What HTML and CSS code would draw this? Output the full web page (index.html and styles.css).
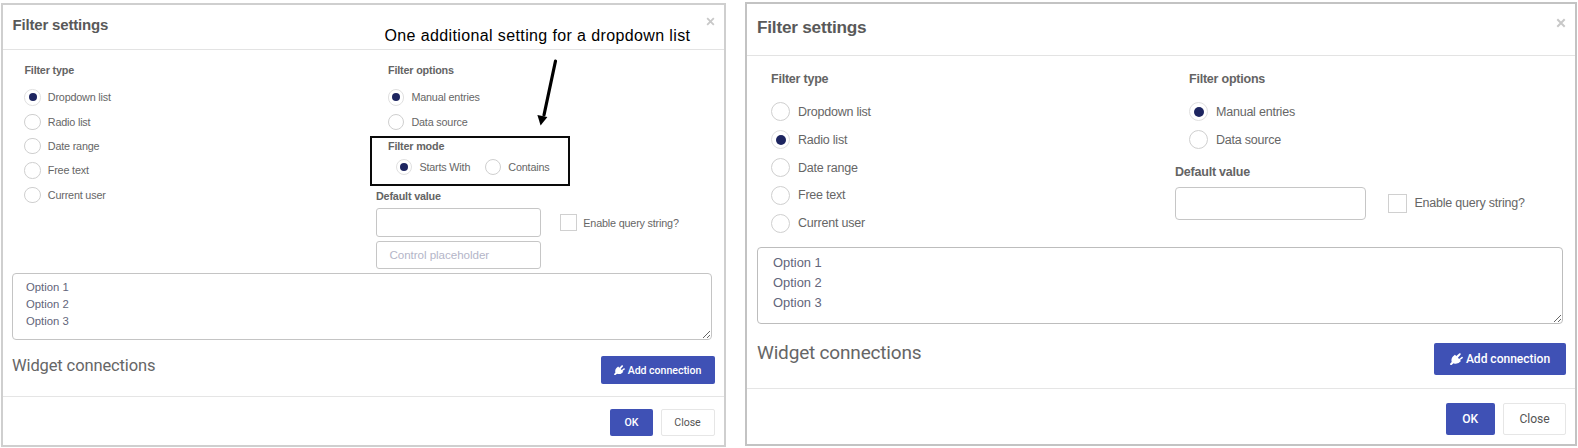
FILE: index.html
```html
<!DOCTYPE html>
<html lang="en">
<head>
<meta charset="utf-8">
<title>Filter settings</title>
<link rel="stylesheet" href="styles.css">
</head>
<body>
<svg class="symbols" aria-hidden="true">
  <symbol id="plug" viewBox="0 0 13 12"><path d="M0.2 10.6L1.7 8.9C1 6.8 1.7 4.6 3.2 3.2L4.9 1.7L6.3 3.1L9.2 0.4C10.2 -0.3 11.3 0.8 10.5 1.7L7.9 4.7L9.1 5.9L11.6 3.9C12.5 3.3 13.4 4.5 12.6 5.2L10 7L11 8L9.5 9.3C7.7 10.9 5.3 11.1 3.6 10.2L1.6 11.9L0.2 12Z"/></symbol>
  <symbol id="times" viewBox="0 0 10 10"><path d="M1.3 1.3L8.7 8.7M8.7 1.3L1.3 8.7" fill="none" stroke="currentColor" stroke-width="2"/></symbol>
</svg>

<main class="stage">
  <section class="dialog dialog-small">
    <header class="head">
      <h2 class="title">Filter settings</h2>
      <svg class="close-x"><use href="#times"/></svg>
    </header>
    <div class="body">
      <div class="columns">
        <div class="col-type">
          <h3 class="label">Filter type</h3>
          <div class="choice"><span class="radio on"></span><span>Dropdown list</span></div>
          <div class="choice"><span class="radio"></span><span>Radio list</span></div>
          <div class="choice"><span class="radio"></span><span>Date range</span></div>
          <div class="choice"><span class="radio"></span><span>Free text</span></div>
          <div class="choice"><span class="radio"></span><span>Current user</span></div>
        </div>
        <div class="col-options">
          <div class="inset">
            <h3 class="label">Filter options</h3>
            <div class="choice"><span class="radio on"></span><span>Manual entries</span></div>
            <div class="choice"><span class="radio"></span><span>Data source</span></div>
          </div>
          <div class="mode">
            <h3 class="mode-label">Filter mode</h3>
            <div class="mode-row">
              <div class="choice"><span class="radio on"></span><span>Starts With</span></div>
              <div class="choice"><span class="radio"></span><span>Contains</span></div>
            </div>
          </div>
          <h3 class="default-label">Default value</h3>
          <div class="default-row">
            <div class="input"></div>
            <span class="check"></span><span>Enable query string?</span>
          </div>
          <div class="input placeholder">Control placeholder</div>
        </div>
      </div>
      <textarea class="options" spellcheck="false">Option 1
Option 2
Option 3</textarea>
      <div class="connections">
        <h3 class="section">Widget connections</h3>
        <div class="btn btn-primary btn-add"><svg class="plug"><use href="#plug"/></svg><span>Add connection</span></div>
      </div>
    </div>
    <footer class="foot">
      <div class="btn btn-primary btn-ok">OK</div>
      <div class="btn btn-plain">Close</div>
    </footer>
    <p class="callout">One additional setting for a dropdown list</p>
    <svg class="arrow" width="30" height="76" viewBox="0 0 30 76"><path d="M20.5 6L9 60" stroke="#000" stroke-width="3.2" stroke-linecap="round" fill="none"/><path d="M2.4 60L12.4 62L5.6 70.5Z" fill="#000"/></svg>
  </section>

  <section class="dialog dialog-large">
    <header class="head">
      <h2 class="title">Filter settings</h2>
      <svg class="close-x"><use href="#times"/></svg>
    </header>
    <div class="body">
      <div class="columns">
        <div class="col-type">
          <h3 class="label">Filter type</h3>
          <div class="choice"><span class="radio"></span><span>Dropdown list</span></div>
          <div class="choice"><span class="radio on"></span><span>Radio list</span></div>
          <div class="choice"><span class="radio"></span><span>Date range</span></div>
          <div class="choice"><span class="radio"></span><span>Free text</span></div>
          <div class="choice"><span class="radio"></span><span>Current user</span></div>
        </div>
        <div class="col-options">
          <div class="inset">
            <h3 class="label">Filter options</h3>
            <div class="choice"><span class="radio on"></span><span>Manual entries</span></div>
            <div class="choice"><span class="radio"></span><span>Data source</span></div>
          </div>
          <h3 class="default-label">Default value</h3>
          <div class="default-row">
            <div class="input"></div>
            <span class="check"></span><span>Enable query string?</span>
          </div>
        </div>
      </div>
      <textarea class="options" spellcheck="false">Option 1
Option 2
Option 3</textarea>
      <div class="connections">
        <h3 class="section">Widget connections</h3>
        <div class="btn btn-primary btn-add"><svg class="plug"><use href="#plug"/></svg><span>Add connection</span></div>
      </div>
    </div>
    <footer class="foot">
      <div class="btn btn-primary btn-ok">OK</div>
      <div class="btn btn-plain">Close</div>
    </footer>
  </section>
</main>
</body>
</html>
```
FILE: styles.css
```css
* { box-sizing: border-box; }
body { margin: 0; background: #fff; font-family: "Liberation Sans", Arial, sans-serif; overflow: hidden; }
h2, h3, p { margin: 0; }
.symbols { position: absolute; width: 0; height: 0; }

.stage { display: flex; align-items: flex-start; gap: 19px; width: 1578px; height: 448px; padding-left: 1px; }

.dialog { position: relative; flex: none; display: flex; flex-direction: column; border: 2px solid #cfcfcf; background: #fff; color: #666; font-size: var(--text); letter-spacing: var(--track); }
.dialog-small {
  width: 725px; height: 444px; margin-top: 3px;
  --text: 10.8px; --track: -0.18px; --title: 15px; --head: 45px; --body: 347px;
  --edge: 9.5px; --radio: 16.4px; --dot: 8px; --gap: 7px; --pitch: 24.35px;
  --area-text: 11.3px; --area-line: 17px;
}
.dialog-large {
  width: 832px; height: 444px; margin-top: 2px; border-color: #c3c3c3;
  --text: 12.5px; --track: -0.22px; --title: 17.2px; --head: 52px; --body: 333px;
  --edge: 10px; --radio: 19px; --dot: 10px; --gap: 8px; --pitch: 27.9px;
  --area-text: 12.9px; --area-line: 20px;
}

.head { display: flex; justify-content: space-between; flex: none; height: var(--head); padding: 0 9px 0 var(--edge); border-bottom: 1px solid #e3e3e3; }
.title { font-size: var(--title); color: #595959; line-height: 20px; padding-top: 10px; }
.close-x { width: 9px; height: 9px; margin-top: 12px; color: #c8c8c8; }
.dialog-large .title { padding-top: 13px; }
.dialog-large .close-x { width: 10px; height: 10px; margin-top: 14px; }

.body { flex: none; height: var(--body); border-bottom: 1px solid #e5e5e5; padding-left: 9px; display: flex; flex-direction: column; align-items: flex-start; }
.dialog-large .body { padding-left: 10px; }
.columns { display: flex; flex: none; height: 223px; }
.dialog-large .columns { height: 191px; }
.col-type { width: 364px; padding-left: 12.4px; }
.dialog-large .col-type { width: 418px; padding-left: 14px; }
.inset { padding-left: 12px; }
.dialog-large .inset { padding-left: 14px; }

.label, .mode-label, .default-label { font-size: var(--text); color: #646464; white-space: nowrap; }
.label { height: 35.2px; line-height: 20px; padding-top: 10px; }
.dialog-large .label { height: 41.8px; padding-top: 13px; }
.choice { display: flex; align-items: center; gap: var(--gap); height: var(--pitch); white-space: nowrap; }
.radio { flex: none; width: var(--radio); height: var(--radio); border: 1px solid #cfcfcf; border-radius: 50%; display: flex; align-items: center; justify-content: center; }
.radio.on { border-color: #e0e0e0; }
.radio.on::after { content: ""; width: var(--dot); height: var(--dot); border-radius: 50%; background: #1d2560; }

.mode { width: 200px; height: 50px; margin: 2.1px 0 0 -6px; padding: 0 0 0 16px; border: 2px solid #0a0a0a; }
.mode-label { line-height: 14px; padding-top: 1px; height: 17px; }
.mode-row { display: flex; gap: 14.7px; padding-left: 8px; height: 24px; }
.mode-row .choice { height: 24px; }

.default-label { line-height: 20px; height: 22.3px; }
.dialog-large .default-label { height: 33.5px; padding-top: 9.3px; line-height: 18px; }
.default-row { display: flex; align-items: center; height: 28.6px; white-space: nowrap; }
.dialog-large .default-row { height: 32.5px; }
.input { flex: none; width: 165px; height: 28.6px; border: 1px solid #c6c6c6; border-radius: 3px; }
.dialog-large .input { width: 190.5px; height: 32.5px; border-radius: 4px; }
.placeholder { margin-top: 4px; padding-left: 12.5px; font-size: 11.6px; letter-spacing: -0.05px; line-height: 26px; color: #b4b5c8; }
.check { width: 16.5px; height: 16.5px; margin: 0 6.8px 0 19px; border: 1px solid #d0d0d0; }
.dialog-large .check { width: 19px; height: 19px; margin: 0 8px 0 22px; }

.options { display: block; flex: none; width: 700px; height: 67px; margin: 0; padding: 5px 13px 0; border: 1px solid #c4c4c4; border-radius: 4px; outline: 0; resize: both; overflow: hidden; font-family: "Liberation Sans", Arial, sans-serif; font-size: var(--area-text); line-height: var(--area-line); color: #62657a; background: #fff; }
.dialog-large .options { width: 806px; height: 77px; padding: 5px 15px 0; border-color: #bdbdbd; }

.connections { display: flex; justify-content: space-between; width: 702.5px; padding-top: 16.3px; }
.dialog-large .connections { width: 809px; padding-top: 18.5px; }
.section { font-family: Roboto, sans-serif; font-weight: 400; font-size: 16.5px; letter-spacing: -0.12px; line-height: 20px; color: #666; }
.dialog-large .section { font-size: 19px; letter-spacing: -0.18px; }

.btn { display: flex; align-items: center; justify-content: center; border-radius: 2px; font-family: Roboto, sans-serif; font-size: 10.6px; letter-spacing: -0.04px; }
.dialog-large .btn { font-size: 12.1px; }
.btn-primary { background: #3f51b5; color: #fff; font-weight: 500; }
.btn-plain { border: 1px solid #e6e6e6; color: #555; width: 54px; height: 27px; }
.btn-add { width: 114px; height: 27.7px; gap: 3px; }
.btn-ok { width: 43px; height: 27px; }
.dialog-large .btn-add { width: 132px; height: 32px; }
.dialog-large .btn-ok { width: 49.5px; height: 32px; }
.dialog-large .btn-plain { width: 63px; height: 32px; }
.plug { width: 11px; height: 10.2px; fill: #fff; }
.dialog-large .plug { width: 13px; height: 12px; }

.foot { display: flex; justify-content: flex-end; gap: 7.5px; padding: 12px 9.5px 0 0; }
.dialog-large .foot { padding: 14px 9px 0 0; gap: 8px; }

.callout { position: absolute; left: 381.5px; top: 21px; font-size: 16px; line-height: 20px; letter-spacing: 0.38px; color: #000; white-space: nowrap; }
.arrow { position: absolute; left: 532px; top: 50px; }
```
